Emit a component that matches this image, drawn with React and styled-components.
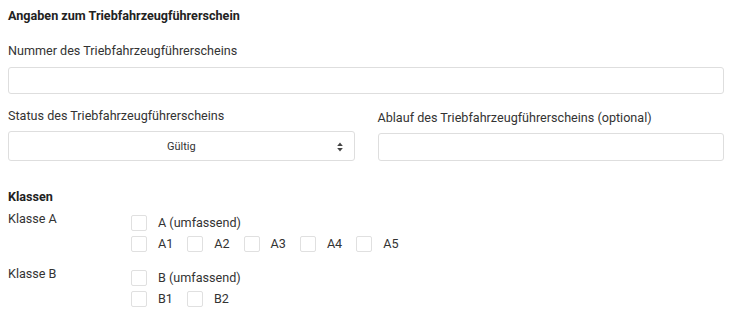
import React from "react";
import styled, { createGlobalStyle } from "styled-components";

const Global = createGlobalStyle`
  html, body { margin: 0; padding: 0; background: #fff; }
  body { font-family: Roboto, "Liberation Sans", Arial, sans-serif; color: #333; }
  * { box-sizing: border-box; }
`;

const Page = styled.div`
  padding: 8px 10px 8px 8px;
  width: 734px;
`;

const Heading = styled.div`
  font-size: 12.6px;
  font-weight: 700;
  color: #222;
  line-height: 15px;
  margin-top: ${(p) => p.$mt || 0}px;
`;

const Label = styled.div`
  font-size: 12.6px;
  line-height: 15px;
  color: #333;
  margin-bottom: ${(p) => p.$mb}px;
`;

const Field = styled.div`
  display: flex;
  flex-direction: column;
  margin-top: ${(p) => p.$mt || 0}px;
`;

const Input = styled.div`
  height: ${(p) => p.$h}px;
  border: 1px solid #dedede;
  border-radius: 3px;
  background: #fff;
`;

const Row2 = styled.div`
  display: grid;
  grid-template-columns: 1fr 1fr;
  column-gap: 23px;
  align-items: end;
  margin-top: 14px;
`;

const Select = styled.div`
  height: 30px;
  border: 1px solid #dedede;
  border-radius: 3px;
  display: flex;
  align-items: center;
  justify-content: center;
  position: relative;
  font-size: 11px;
  color: #333;
`;

const Arrow = styled.svg`
  position: absolute;
  right: 11px;
  top: 10px;
`;

const ClassGroup = styled.div`
  display: grid;
  grid-template-columns: 123px 1fr;
  margin-top: ${(p) => p.$mt}px;
`;

const ClassLabel = styled.div`
  font-size: 12.6px;
  line-height: 15px;
`;

const Options = styled.div`
  display: flex;
  flex-direction: column;
  gap: 5px;
  padding-top: 4px;
`;

const OptRow = styled.div`
  display: flex;
  align-items: center;
  height: 16px;
`;

const Opt = styled.div`
  display: flex;
  align-items: center;
  margin-right: 14px;
  font-size: 12.6px;
  line-height: 16px;
  color: #333;
`;

const Box = styled.span`
  width: 16px;
  height: 16px;
  border: 1px solid #e0e0e0;
  border-radius: 2px;
  margin-right: 11px;
  background: #fff;
`;

const Option = ({ children }) => (
  <Opt>
    <Box />
    {children}
  </Opt>
);

export default function App() {
  return (
    <Page>
      <Global />
      <Heading>Angaben zum Triebfahrzeugführerschein</Heading>
      <Field $mt={20}>
        <Label $mb={9}>Nummer des Triebfahrzeugführerscheins</Label>
        <Input $h={27} />
      </Field>
      <Row2>
        <Field>
          <Label $mb={8}>Status des Triebfahrzeugführerscheins</Label>
          <Select>
            Gültig
            <Arrow width="6" height="10" viewBox="0 0 6 10">
              <path d="M3 0.5 L5.8 4 L0.2 4 Z" fill="#444" />
              <path d="M3 9.5 L5.8 6 L0.2 6 Z" fill="#444" />
            </Arrow>
          </Select>
        </Field>
        <Field>
          <Label $mb={8}>Ablauf des Triebfahrzeugführerscheins (optional)</Label>
          <Input $h={28} />
        </Field>
      </Row2>
      <Heading $mt={28}>Klassen</Heading>
      <ClassGroup $mt={7}>
        <ClassLabel>Klasse A</ClassLabel>
        <Options>
          <OptRow>
            <Option>A (umfassend)</Option>
          </OptRow>
          <OptRow>
            <Option>A1</Option>
            <Option>A2</Option>
            <Option>A3</Option>
            <Option>A4</Option>
            <Option>A5</Option>
          </OptRow>
        </Options>
      </ClassGroup>
      <ClassGroup $mt={14}>
        <ClassLabel>Klasse B</ClassLabel>
        <Options>
          <OptRow>
            <Option>B (umfassend)</Option>
          </OptRow>
          <OptRow>
            <Option>B1</Option>
            <Option>B2</Option>
          </OptRow>
        </Options>
      </ClassGroup>
    </Page>
  );
}
